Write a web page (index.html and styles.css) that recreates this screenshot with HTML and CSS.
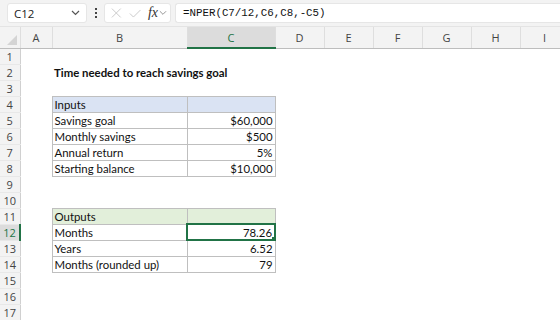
FILE: index.html
```html
<html>
<head>
<title>NPER savings goal</title>
<link rel="stylesheet" href="styles.css">
</head>
<body>
<div class="toolbar">
  <div class="namebox"><span>C12</span>
    <svg class="chev" width="9" height="6" viewBox="0 0 9 6"><path d="M1 1 L4.5 4.5 L8 1" fill="none" stroke="#555" stroke-width="1.2"/></svg>
  </div>
  <div class="dots"><i></i><i></i><i></i></div>
  <div class="fxbox">
    <svg width="12" height="12" viewBox="0 0 12 12"><path d="M1 1 L11 11 M11 1 L1 11" stroke="#c4c4c4" stroke-width="1"/></svg>
    <svg width="14" height="11" viewBox="0 0 14 11"><path d="M1 5.5 L5 9.5 L13 1.5" fill="none" stroke="#c4c4c4" stroke-width="1"/></svg>
    <span class="fx">fx</span>
    <svg class="chev" width="9" height="6" viewBox="0 0 9 6"><path d="M1 1 L4.5 4.5 L8 1" fill="none" stroke="#888" stroke-width="1"/></svg>
  </div>
  <div class="formula">=NPER(C7/12,C6,C8,-C5)</div>
</div>

<table class="sheet">
  <colgroup>
    <col class="w-rh"><col class="w-a"><col class="w-b"><col class="w-c">
    <col class="w-n"><col class="w-n"><col class="w-n"><col class="w-n"><col class="w-n"><col class="w-n">
  </colgroup>
  <tr class="colhead">
    <th class="corner"><span class="tri"></span></th>
    <th>A</th><th>B</th><th class="colsel">C</th><th>D</th><th>E</th><th>F</th><th>G</th><th>H</th><th>I</th>
  </tr>
  <tr><th>1</th><td></td><td></td><td></td><td></td><td></td><td></td><td></td><td></td><td></td></tr>
  <tr><th>2</th><td></td><td class="title" colspan="2">Time needed to reach savings goal</td><td></td><td></td><td></td><td></td><td></td><td></td></tr>
  <tr><th>3</th><td></td><td></td><td></td><td></td><td></td><td></td><td></td><td></td><td></td></tr>
  <tr><th>4</th><td></td><td class="box blue">Inputs</td><td class="box blue"></td><td></td><td></td><td></td><td></td><td></td><td></td></tr>
  <tr><th>5</th><td></td><td class="box">Savings goal</td><td class="box num">$60,000</td><td></td><td></td><td></td><td></td><td></td><td></td></tr>
  <tr><th>6</th><td></td><td class="box">Monthly savings</td><td class="box num">$500</td><td></td><td></td><td></td><td></td><td></td><td></td></tr>
  <tr><th>7</th><td></td><td class="box">Annual return</td><td class="box num">5%</td><td></td><td></td><td></td><td></td><td></td><td></td></tr>
  <tr><th>8</th><td></td><td class="box">Starting balance</td><td class="box num">$10,000</td><td></td><td></td><td></td><td></td><td></td><td></td></tr>
  <tr><th>9</th><td></td><td></td><td></td><td></td><td></td><td></td><td></td><td></td><td></td></tr>
  <tr><th>10</th><td></td><td></td><td></td><td></td><td></td><td></td><td></td><td></td><td></td></tr>
  <tr><th>11</th><td></td><td class="box green">Outputs</td><td class="box green"></td><td></td><td></td><td></td><td></td><td></td><td></td></tr>
  <tr><th class="rowsel">12</th><td></td><td class="box">Months</td><td class="box num active">78.26<span class="handle"></span></td><td></td><td></td><td></td><td></td><td></td><td></td></tr>
  <tr><th>13</th><td></td><td class="box">Years</td><td class="box num">6.52</td><td></td><td></td><td></td><td></td><td></td><td></td></tr>
  <tr><th>14</th><td></td><td class="box">Months (rounded up)</td><td class="box num">79</td><td></td><td></td><td></td><td></td><td></td><td></td></tr>
  <tr><th>15</th><td></td><td></td><td></td><td></td><td></td><td></td><td></td><td></td><td></td></tr>
  <tr><th>16</th><td></td><td></td><td></td><td></td><td></td><td></td><td></td><td></td><td></td></tr>
  <tr><th>17</th><td></td><td></td><td></td><td></td><td></td><td></td><td></td><td></td><td></td></tr>
</table>
</body>
</html>
```

FILE: styles.css
```css
body{
    margin: 0;
    background: #ffffff;
    overflow: hidden;
    font-family: "Open Sans", "Noto Sans", sans-serif;
}

.toolbar{
    display: flex;
    align-items: center;
    height: 27px;
    padding: 0 0 0 7px;
    background: #f3f3f3;
    box-sizing: border-box;
    border-bottom: 1px solid #e4e4e4;
}
.namebox{
    display: flex;
    align-items: center;
    justify-content: space-between;
    width: 80px;
    height: 20px;
    padding: 0 6px 0 6px;
    box-sizing: border-box;
    background: #fff;
    border: 1px solid #e6e6e6;
    border-radius: 3px;
    font-size: 11.5px;
    color: #222;
}
.dots{
    display: flex;
    flex-direction: column;
    gap: 2px;
    margin: 0 7px 0 8px;
}
.dots i{
    display: block;
    width: 2px;
    height: 2px;
    background: #444;
}
.fxbox{
    display: flex;
    align-items: center;
    gap: 7px;
    width: 67px;
    height: 20px;
    padding: 0 3px 0 6px;
    box-sizing: border-box;
    background: #fff;
    border: 1px solid #e6e6e6;
    border-radius: 3px;
}
.fxbox .fx{
    font-family: "Liberation Serif", serif;
    font-style: italic;
    font-size: 14px;
    color: #333;
    margin-right: -6px;
}
.formula{
    flex: 1;
    height: 20px;
    margin-left: 4px;
    padding-left: 7px;
    box-sizing: border-box;
    background: #fff;
    border: 1px solid #e6e6e6;
    border-right: none;
    border-radius: 3px 0 0 3px;
    font-family: "Liberation Mono", monospace;
    font-size: 10.8px;
    line-height: 18px;
    color: #111;
}

.sheet{
    border-collapse: collapse;
    table-layout: fixed;
    width: 569px;
}
.w-rh{ width: 20px; }
.w-a{ width: 32px; }
.w-b{ width: 135px; }
.w-c{ width: 88px; }
.w-n{ width: 49px; }

.sheet td, .sheet th{
    height: 16px;
    padding: 0;
    box-sizing: border-box;
    white-space: nowrap;
    overflow: hidden;
}
.sheet th{
    background: #f3f3f3;
    font-weight: normal;
    font-size: 11px;
    color: #444;
    text-align: center;
    border-right: 1px solid #d0d0d0;
    border-bottom: 1px solid #e8e8e8;
}
.colhead th{
    height: 21px;
    border-right: 1px solid #dedede;
    border-bottom: 1px solid #bdbdbd;
}
.colhead th.colsel{
    background: #dcdcdc;
    color: #217346;
    border-bottom: 2px solid #217346;
}
.sheet th.rowsel{
    background: #dcdcdc;
    color: #217346;
    border-right: 2px solid #217346;
}
.corner{
    position: relative;
}
.tri{
    position: absolute;
    right: 3px;
    bottom: 3px;
    width: 0;
    height: 0;
    border-left: 10px solid transparent;
    border-bottom: 10px solid #d4d4d4;
}

.sheet td{
    font-family: "Lato", "Liberation Sans", sans-serif;
    font-size: 11.4px;
    color: #111;
    padding: 0 2px;
}
.title{
    font-weight: bold;
}
.box{
    border: 1px solid #bfbfbf;
}
.num{
    text-align: right;
}
.blue{
    background: #dae3f3;
}
.green{
    background: #e2efda;
}
.active{
    position: relative;
    border: 2px solid #217346;
}
.handle{
    position: absolute;
    right: -4px;
    bottom: -4px;
    width: 5px;
    height: 5px;
    background: #217346;
    border: 1px solid #fff;
}
```
